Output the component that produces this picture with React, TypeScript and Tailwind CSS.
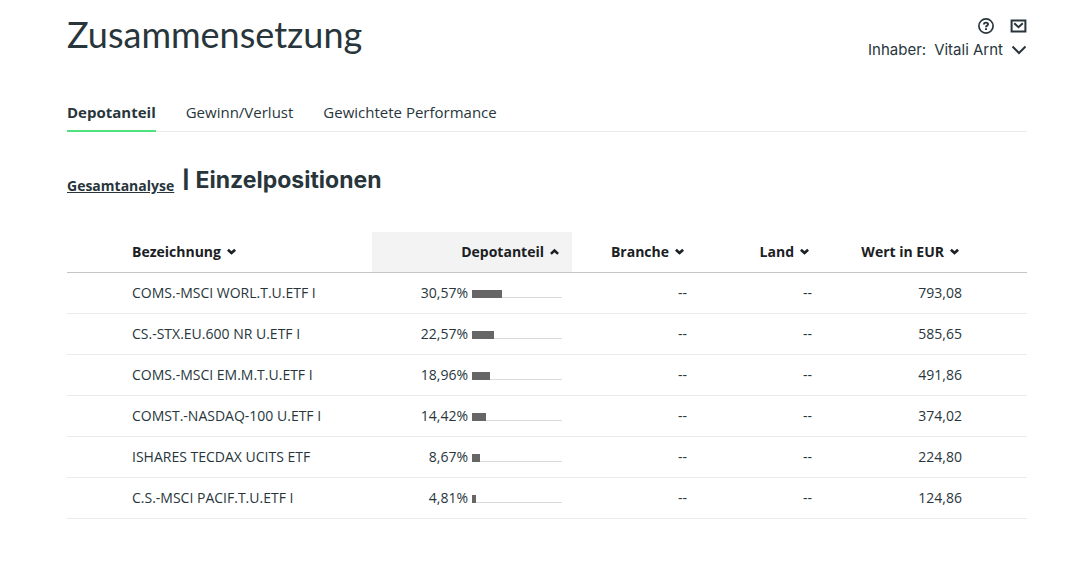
import React from 'react';

type Position = {
  name: string;
  share: string;
  bar: number;
  value: string;
};

const positions: Position[] = [
  { name: 'COMS.-MSCI WORL.T.U.ETF I', share: '30,57%', bar: 30, value: '793,08' },
  { name: 'CS.-STX.EU.600 NR U.ETF I', share: '22,57%', bar: 22, value: '585,65' },
  { name: 'COMS.-MSCI EM.M.T.U.ETF I', share: '18,96%', bar: 18, value: '491,86' },
  { name: 'COMST.-NASDAQ-100 U.ETF I', share: '14,42%', bar: 14, value: '374,02' },
  { name: 'ISHARES TECDAX UCITS ETF', share: '8,67%', bar: 8, value: '224,80' },
  { name: 'C.S.-MSCI PACIF.T.U.ETF I', share: '4,81%', bar: 4, value: '124,86' },
];

function SortButton({ label, up = false }: { label: string; up?: boolean }) {
  return (
    <button type="button" className="inline-flex items-center gap-1.5 font-bold whitespace-nowrap">
      {label}
      <svg width="9" height="8" viewBox="0 0 9 8" fill="none" stroke="currentColor" strokeWidth="2.6" aria-hidden="true">
        <path d={up ? 'M0.9 5.9 L4.5 2.6 L8.1 5.9' : 'M0.9 1.7 L4.5 5 L8.1 1.7'} />
      </svg>
    </button>
  );
}

function Header() {
  return (
    <header className="flex items-start justify-between">
      <h1 className="font-['Lato','Inter',sans-serif] text-4xl leading-10">Zusammensetzung</h1>
      <div className="flex flex-col items-end gap-1 pt-1 font-['Inter',sans-serif]">
        <div className="flex items-center gap-4">
          <button type="button" aria-label="Hilfe">
            <svg width="16" height="16" viewBox="0 0 16 16" fill="none" stroke="currentColor" className="block">
              <circle cx="8" cy="8" r="7.1" strokeWidth="1.7" />
              <path d="M5.9 6.5 C5.9 4 10.1 4 10.1 6.3 C10.1 7.7 8 7.5 8 9.2" strokeWidth="1.9" />
              <path d="M7 10.3 H9 V12.1 H7 Z" fill="currentColor" stroke="none" />
            </svg>
          </button>
          <button type="button" aria-label="Postfach">
            <svg width="17" height="16" viewBox="0 0 17 16" fill="none" stroke="currentColor" className="block">
              <path d="M1.6 2.6 H15.4 V13.6 H1.6 Z" strokeWidth="2" />
              <path d="M4.2 5.2 L8.5 9.2 L12.8 5.2" strokeWidth="2" />
            </svg>
          </button>
        </div>
        <button type="button" className="flex items-center gap-2 text-[15px] leading-6">
          <span>Inhaber:</span>
          <span>Vitali Arnt</span>
          <svg width="16" height="10" viewBox="0 0 16 10" fill="none" stroke="currentColor" strokeWidth="2" aria-hidden="true">
            <path d="M1.5 1.5 L8 8 L14.5 1.5" />
          </svg>
        </button>
      </div>
    </header>
  );
}

export default function App() {
  return (
    <main className="bg-white pt-3.5 pr-[41px] pb-12 pl-[67px] font-['Open_Sans',sans-serif] text-[#28363c]">
      <Header />
      <nav className="mt-8 flex gap-[30px] border-b border-[#ebebeb] text-[15px] leading-5">
        <a href="#depotanteil" aria-current="page" className="-mb-px border-b-2 border-[#4ee27e] pt-2 pb-2 font-bold">
          Depotanteil
        </a>
        <a href="#gewinn" className="pt-2 pb-2">Gewinn/Verlust</a>
        <a href="#performance" className="pt-2 pb-2">Gewichtete Performance</a>
      </nav>
      <div className="mt-8 flex items-end gap-2">
        <a href="#gesamtanalyse" className="text-sm leading-5 font-bold underline">Gesamtanalyse</a>
        <h2 className="flex items-center gap-1.5 font-['Inter',sans-serif] text-[23px] leading-8 font-bold">
          <span className="text-lg leading-8 font-black">|</span>
          Einzelpositionen
        </h2>
      </div>
      <table className="mt-9 w-full table-fixed border-collapse text-sm leading-5">
        <colgroup>
          <col />
          <col className="w-[200px]" />
          <col className="w-[115px]" />
          <col className="w-[125px]" />
          <col className="w-[215px]" />
        </colgroup>
        <thead>
          <tr className="h-10 border-b border-[#c4c4c4] text-right text-[#1a2023]">
            <th className="pl-[65px] text-left"><SortButton label="Bezeichnung" /></th>
            <th className="bg-[#f3f3f3] pr-[13px]"><SortButton label="Depotanteil" up /></th>
            <th className="pr-[3px]"><SortButton label="Branche" /></th>
            <th className="pr-[3px]"><SortButton label="Land" /></th>
            <th className="pr-[68px]"><SortButton label="Wert in EUR" /></th>
          </tr>
        </thead>
        <tbody>
          {positions.map((p) => (
            <tr key={p.name} className="h-[41px] border-b border-[#ebebeb] text-right">
              <td className="pl-[65px] text-left whitespace-nowrap">{p.name}</td>
              <td className="pr-2.5">
                <div className="flex items-center justify-end gap-1">
                  <span>{p.share}</span>
                  <div className="mt-0.5 flex h-2 w-[90px] items-end">
                    <div className="h-2 bg-[#666]" style={{ width: p.bar }} />
                    <div className="h-px flex-1 bg-[#dadada]" />
                  </div>
                </div>
              </td>
              <td>--</td>
              <td>--</td>
              <td className="pr-[65px]">{p.value}</td>
            </tr>
          ))}
        </tbody>
      </table>
    </main>
  );
}
